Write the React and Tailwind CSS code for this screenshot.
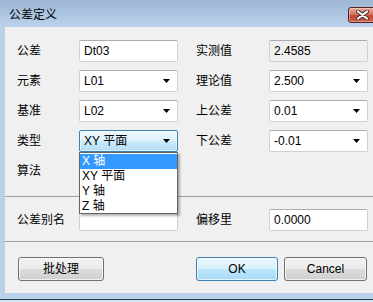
const font = { fontFamily: '"Liberation Sans", "Noto Sans CJK SC", sans-serif' };

const Arrow = () => (
  <svg width="7" height="4" viewBox="0 0 7 4" className="shrink-0">
    <polygon points="0,0 7,0 3.5,4" fill="#000" />
  </svg>
);

const TextBox = ({ value, readOnly }) => (
  <div
    className={`h-[22px] w-[99px] flex items-center px-[4px] rounded-[2px] border border-[#cdd0d5] border-t-[#abadb3] text-[12px] text-black ${
      readOnly ? "bg-[#f0f0f0]" : "bg-white"
    }`}
  >
    {value}
  </div>
);

const Combo = ({ value, hot }) => (
  <div
    className={`h-[22px] w-[99px] flex items-center justify-between pl-[4px] pr-[7px] rounded-[2px] border text-[12px] text-black ${
      hot
        ? "border-[#3c7fb1] bg-[linear-gradient(to_bottom,#ecf7fd_0%,#ddf1fc_50%,#c9eafb_50%,#b4ddf3_100%)] shadow-[inset_0_0_0_1px_rgba(255,255,255,0.5)]"
        : "border-[#cdd0d5] border-t-[#abadb3] bg-white"
    }`}
  >
    <span>{value}</span>
    <Arrow />
  </div>
);

const Label = ({ children, w }) => (
  <div className={`${w} text-[12px] text-black leading-none`}>{children}</div>
);

const Row = ({ left, leftCtl, right, rightCtl }) => (
  <div className="flex items-center h-[22px] pl-[12px]">
    <Label w="w-[62px]">{left}</Label>
    {leftCtl}
    <div className="w-[18px]" />
    {right && <Label w="w-[73px]">{right}</Label>}
    {rightCtl}
  </div>
);

const Button = ({ children, primary, w }) => (
  <div
    className={`${w} h-[24px] flex items-center justify-center rounded-[3px] border text-[12px] text-black ${
      primary
        ? "border-[#3c7fb1] bg-[linear-gradient(to_bottom,#eaf6fd_0%,#d9f0fc_50%,#bee6fd_50%,#a7d9f5_100%)] shadow-[inset_0_0_0_1px_rgba(255,255,255,0.7)]"
        : "border-[#707070] bg-[linear-gradient(to_bottom,#f2f2f2_0%,#ebebeb_50%,#dddddd_50%,#cfcfcf_100%)] shadow-[inset_0_0_0_1px_rgba(255,255,255,0.7)]"
    }`}
  >
    {children}
  </div>
);

export default function App() {
  return (
    <div className="w-[373px] h-[302px] overflow-hidden flex flex-col bg-[#bad1ea]" style={font}>
      {/* title bar */}
      <div className="h-[27px] shrink-0 flex items-start bg-[linear-gradient(to_bottom,#9db7d4,#bbd2eb)] overflow-hidden">
        <div className="pl-[9px] pt-[8px] text-[12px] leading-[14px] text-black">公差定义</div>
        <div className="flex-1" />
        <div className="mt-[7px] w-[29px] h-[16px] mr-[-4px] rounded-[3px] border border-[#5b2020] bg-[linear-gradient(to_bottom,#e9a99c_0%,#d47866_45%,#c24a35_55%,#c9614a_100%)] flex items-center justify-center shadow-[inset_0_0_0_1px_rgba(255,255,255,0.35)]">
          <svg width="13" height="10" viewBox="0 0 13 10">
            <path d="M2 1.5 L11 8.5 M11 1.5 L2 8.5" stroke="#4a2a2a" strokeWidth="4" strokeLinecap="round" />
            <path d="M2 1.5 L11 8.5 M11 1.5 L2 8.5" stroke="#ffffff" strokeWidth="2.2" strokeLinecap="round" />
          </svg>
        </div>
      </div>

      <div className="flex flex-1">
        <div className="w-[5px] shrink-0" />
        {/* client */}
        <div className="flex-1 h-[266px] bg-[#f0f0f0] relative flex flex-col pt-[13px]">
          <div className="flex flex-col gap-[8px]">
            <Row left="公差" leftCtl={<TextBox value="Dt03" />} right="实测值" rightCtl={<TextBox value="2.4585" readOnly />} />
            <Row left="元素" leftCtl={<Combo value="L01" />} right="理论值" rightCtl={<Combo value="2.500" />} />
            <Row left="基准" leftCtl={<Combo value="L02" />} right="上公差" rightCtl={<Combo value="0.01" />} />
            <Row left="类型" leftCtl={<Combo value="XY 平面" hot />} right="下公差" rightCtl={<Combo value="-0.01" />} />
            <Row left="算法" leftCtl={<Combo value="" />} />
          </div>

          <div className="mt-[14px] h-px bg-[#a0a0a0]" />

          <div className="mt-[12px]">
            <Row left="公差别名" leftCtl={<TextBox value="" />} right="偏移里" rightCtl={<TextBox value="0.0000" />} />
          </div>

          <div className="mt-[10px] h-px bg-[#a0a0a0]" />

          <div className="mt-[15px] flex items-center pl-[13px]">
            <Button w="w-[86px]">批处理</Button>
            <div className="w-[92px]" />
            <Button w="w-[82px]" primary>OK</Button>
            <div className="w-[6px]" />
            <Button w="w-[83px]">Cancel</Button>
          </div>

          {/* dropdown list */}
          <div className="absolute left-[74px] top-[125px] w-[99px] h-[62px] bg-white border border-[#646464] shadow-[2px_2px_2px_rgba(0,0,0,0.3)] text-[12px] text-black flex flex-col pt-px">
            <div className="h-[15px] leading-[15px] pl-[2px] bg-[#3399ff] text-white">X 轴</div>
            <div className="h-[15px] leading-[15px] pl-[2px]">XY 平面</div>
            <div className="h-[15px] leading-[15px] pl-[2px]">Y 轴</div>
            <div className="h-[15px] leading-[15px] pl-[2px]">Z 轴</div>
          </div>
        </div>
      </div>

      <div className="h-[6px] shrink-0" />
      <div className="h-px shrink-0 bg-[#23384a]" />
      <div className="h-[2px] shrink-0 bg-[#cfe3f0]" />
    </div>
  );
}
